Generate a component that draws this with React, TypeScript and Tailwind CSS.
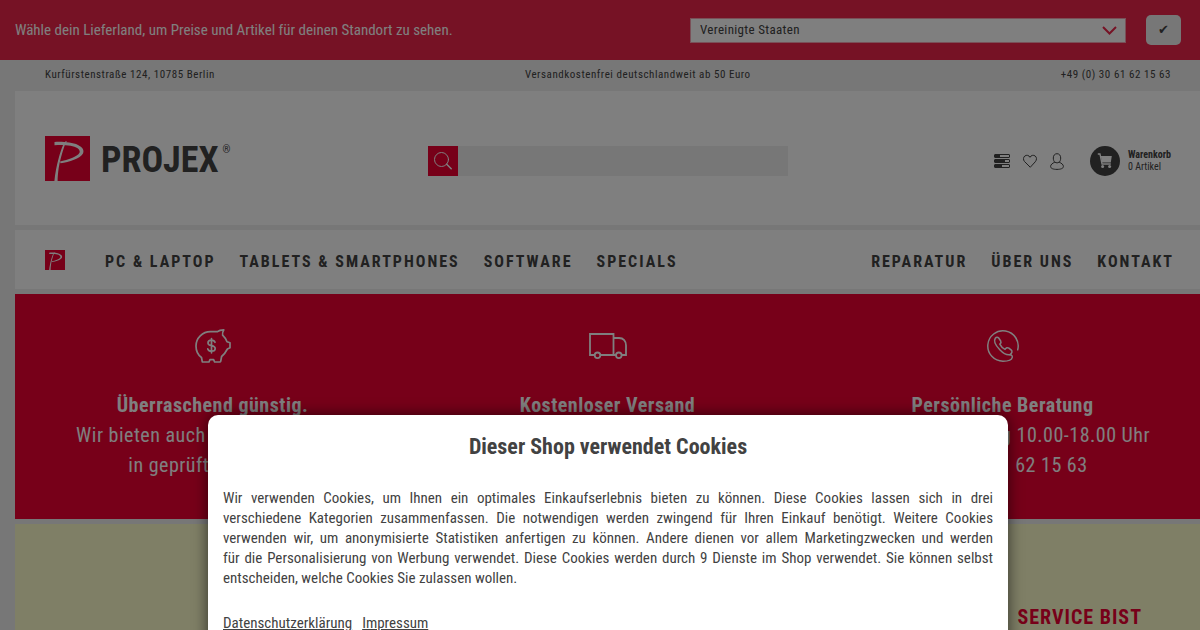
const mainNav = ["PC & Laptop", "Tablets & Smartphones", "Software", "Specials"];
const serviceNav = ["Reparatur", "Über uns", "Kontakt"];

const iconProps = {
  fill: "none",
  stroke: "currentColor",
  strokeLinecap: "round",
  strokeLinejoin: "round",
} as const;

function LogoMark({ className }: { className: string }) {
  return (
    <svg className={className} viewBox="0 0 45 45" aria-hidden="true">
      <rect width="45" height="45" fill="#ee0032" />
      <path
        fill="#fff"
        d="M9.500 6 C17 5.500 27 6.200 33 9 C37.500 11.300 39.500 14.200 38 17.500 C35.500 22.500 24 26 15.500 27.200 L15 25.500 C23 24 32.500 20.500 34.500 16.800 C36 13.500 31 10.500 25.500 9.700 C20 8.800 15 8.900 9.500 9.200 Z"
      />
      <path
        fill="#fff"
        d="M20.800 5 L21.800 5.600 L19.800 9 C17 17 14.800 25 13.700 32 C13 37 12.600 41 12.600 45 L9.400 45 C10 38 11.800 29 13.600 22.500 C15 17 16.800 12 17.900 9.500 Z"
      />
    </svg>
  );
}

function CountryBar() {
  return (
    <form className="flex items-center bg-[#ed254a] h-15 pl-[15px] pr-[19px] text-white">
      <label htmlFor="country" className="flex-1 text-[15px] leading-5">
        Wähle dein Lieferland, um Preise und Artikel für deinen Standort zu sehen.
      </label>
      <div className="relative w-[436px] mr-5">
        <select
          id="country"
          className="block w-full h-[25px] appearance-none bg-white border border-[#f5a0b0] pl-[9px] pr-8 text-[13px] tracking-wide text-[#424242]"
        >
          <option>Vereinigte Staaten</option>
          <option>Deutschland</option>
        </select>
        <svg
          className="absolute right-[9px] top-2 w-[15px] h-[9px] text-[#ed254a] pointer-events-none"
          viewBox="0 0 15 9"
          fill="none"
          stroke="currentColor"
          strokeWidth="2"
        >
          <path d="M1 1l6.500 6.500L14 1" />
        </svg>
      </div>
      <button
        type="button"
        aria-label="Lieferland speichern"
        className="w-[35px] h-[30px] rounded-[5px] bg-[#eee] text-[13px] text-[#424242]"
      >
        ✔
      </button>
    </form>
  );
}

function Header() {
  return (
    <header className="grid grid-cols-[1fr_360px_1fr] items-start bg-white h-[134px] pt-[45px] pl-[30px] pr-[29px]">
      <a href="#" className="flex text-[#424242]">
        <LogoMark className="w-[45px] h-[45px]" />
        <span className="pl-[11px] pt-0.5 text-[36px] leading-[45px] font-bold">PROJEX</span>
        <span className="pl-1 pt-1 text-[10px] leading-5">®</span>
      </a>

      <form className="flex h-[30px] mt-[10px]" role="search">
        <button type="button" aria-label="Suchen" className="w-[30px] bg-[#ee0032] text-white flex items-center justify-center">
          <svg className="w-[18px] h-[18px]" viewBox="0 0 18 18" {...iconProps}>
            <circle cx="7.500" cy="7.500" r="7" />
            <path d="M12.700 12.300l4.500 4.500" strokeWidth="1.500" />
          </svg>
        </button>
        <input type="search" aria-label="Suche" className="flex-1 min-w-0 bg-[#eee] px-2 text-sm" />
      </form>

      <div className="flex items-center justify-end mt-[10px] text-[#424242]">
        <a href="#" aria-label="Vergleichen" className="mr-[13px]">
          <svg className="w-4 h-[14px]" viewBox="0 0 16 14" fill="none" stroke="currentColor">
            <rect x="0.500" y="0.500" width="15" height="3" rx="0.500" />
            <rect x="0.500" y="5.500" width="15" height="3" rx="0.500" />
            <rect x="0.500" y="10.500" width="15" height="3" rx="0.500" />
            <path d="M1 2h5M1 7h10M1 12h7" strokeWidth="3" />
          </svg>
        </a>
        <a href="#" aria-label="Merkzettel" className="mr-[13px]">
          <svg className="w-[14px] h-[14px]" viewBox="0 0 14 14" {...iconProps}>
            <path d="M7 13L1.500 7.500C0 5.800.200 3.300 1.800 2 3.500.700 6 1.200 7 3.300 8 1.200 10.500.700 12.200 2c1.600 1.300 1.800 3.800.300 5.500z" />
          </svg>
        </a>
        <a href="#" aria-label="Mein Konto" className="mr-[26px]">
          <svg className="w-[14px] h-[17px]" viewBox="0 0 14 17" {...iconProps}>
            <path d="M4.800 9.200C3.800 8.300 3.300 6.800 3.300 5 3.300 2.500 4.700.700 7 .700S10.700 2.500 10.700 5c0 1.800-.500 3.300-1.500 4.200 2.300 1 4.200 2.300 4.200 4.300s-2.800 2.900-6.400 2.900-6.400-.900-6.400-2.900 1.900-3.300 4.200-4.300Q7 10.800 9.200 9.200" />
          </svg>
        </a>
        <a href="#" className="flex items-center gap-2">
          <span className="flex items-center justify-center w-[30px] h-[30px] rounded-full bg-[#424242] text-white">
            <svg className="w-4 h-4" viewBox="0 0 16 16" fill="none" stroke="currentColor">
              <path fill="currentColor" stroke="none" d="M3.800 3h11l-1 6.500H5z" />
              <path d="M.800 1H3l2 10h8.800" strokeWidth="1.300" />
              <circle cx="5.600" cy="13.600" r="1.500" fill="currentColor" stroke="none" />
              <circle cx="12.600" cy="13.600" r="1.500" fill="currentColor" stroke="none" />
            </svg>
          </span>
          <span className="text-[10px] leading-3">
            <strong className="block">Warenkorb</strong>
            0 Artikel
          </span>
        </a>
      </div>
    </header>
  );
}

function Nav() {
  return (
    <nav className="flex items-center bg-white h-[59px] pl-[30px] pr-[26px] text-[16px] leading-5 font-bold uppercase tracking-[2px] text-[#424242]">
      <a href="#" aria-label="Startseite" className="mr-10">
        <LogoMark className="w-5 h-5" />
      </a>
      <div className="flex flex-1 gap-6 pt-1">
        {mainNav.map((item) => (
          <a key={item} href="#">{item}</a>
        ))}
      </div>
      <div className="flex gap-6 pt-1">
        {serviceNav.map((item) => (
          <a key={item} href="#">{item}</a>
        ))}
      </div>
    </nav>
  );
}

function PiggyIcon() {
  return (
    <svg className="w-9 h-[34px]" viewBox="0 0 36 34" {...iconProps} strokeWidth="1.700">
      <path d="M22.500 2.700C24 1.300 26 .900 28.800.900 27.600 2.800 27.300 4.500 27.600 6.200 29.500 8 31 10.300 32 12.800L35 13.800V18.800L32.400 20C31 22.800 29 25.500 26.600 27.500L25.700 32.300Q25.500 33 24.900 33H19.600L18.600 30.700H15L14 33H8.500L7.300 32.800 6.500 28.500C3 26 1 21.500 1 17 1 9 7.500 2.700 15.500 2.700Z" />
      <path d="M20 13.300C19.500 11.900 18 11.200 16.500 11.200c-1.900 0-3.500 1-3.500 2.700 0 3.900 7.200 1.700 7.200 5.600 0 1.700-1.700 2.700-3.600 2.700-1.800 0-3.300-.800-3.800-2.300M16.500 9.500v14.300" />
    </svg>
  );
}

function TruckIcon() {
  return (
    <svg className="w-[38px] h-[26px]" viewBox="0 0 38 26" fill="none" stroke="currentColor" strokeWidth="1.800">
      <path d="M5.500 22H1V1h23.500v21H11.500M24.500 5H30c4.500 0 7 3.200 7 7.500V22h-4M24.500 22h2.300" />
      <circle cx="8.500" cy="22.300" r="2.800" />
      <circle cx="29.800" cy="22.300" r="2.800" />
    </svg>
  );
}

function PhoneIcon() {
  return (
    <svg className="w-8 h-8" viewBox="0 0 32 32" {...iconProps} strokeWidth="1.500">
      <path d="M30.700 19.800A15.200 15.200 0 1 0 16 31.200C21 31.200 24.800 30 25.200 27.500 25.500 26 24.800 24.800 23 24.700" />
      <path d="M8.300 8.200C9.300 7 10.800 6.900 11.700 8l2 3c.700 1.200.300 2.200-.900 3.200 1.200 2.400 3 4.200 5.200 5.200 1.100-1.800 2.500-2.200 3.900-1.300l2.400 2c1.200 1.300.800 3-1.300 4.600-3 .600-6.800-1.400-10.200-5C8.800 15.500 6.300 11 8.300 8.200z" />
    </svg>
  );
}

const benefits = [
  {
    icon: <PiggyIcon />,
    title: "Überraschend günstig.",
    lines: ["Wir bieten auch Gebrauchtgeräte", "in geprüfter Qualität"],
  },
  {
    icon: <TruckIcon />,
    title: "Kostenloser Versand",
    lines: [],
  },
  {
    icon: <PhoneIcon />,
    title: "Persönliche Beratung",
    lines: ["Montag bis Freitag 10.00-18.00 Uhr", "Tel. 030 61 62 15 63"],
  },
];

function Benefits() {
  return (
    <section className="grid grid-cols-3 bg-[#ee0032] pt-8 pb-[39px] text-center text-[20px] leading-[30px] tracking-wide text-white">
      {benefits.map(({ icon, title, lines }) => (
        <div key={title}>
          <div className="flex items-center justify-center h-10 mb-6">{icon}</div>
          <h3 className="font-bold">{title}</h3>
          {lines.map((line) => (
            <p key={line}>{line}</p>
          ))}
        </div>
      ))}
    </section>
  );
}

function CookieDialog() {
  return (
    <div
      role="dialog"
      aria-labelledby="cookie-title"
      className="absolute left-1/2 -translate-x-1/2 ml-2 top-[415px] w-[800px] max-w-full min-h-[400px] bg-white rounded-[10px] shadow-[0_0_15px_rgba(0,0,0,0.6)] p-[15px] text-[15px] leading-5 text-[#424242]"
    >
      <h2 id="cookie-title" className="text-center text-[22px] leading-[34px] font-bold">
        Dieser Shop verwendet Cookies
      </h2>
      <p className="mt-6 text-justify">
        Wir verwenden Cookies, um Ihnen ein optimales Einkaufserlebnis bieten zu können. Diese Cookies lassen
        sich in drei verschiedene Kategorien zusammenfassen. Die notwendigen werden zwingend für Ihren Einkauf
        benötigt. Weitere Cookies verwenden wir, um anonymisierte Statistiken anfertigen zu können. Andere
        dienen vor allem Marketingzwecken und werden für&nbsp;die&nbsp;Personalisierung von Werbung verwendet.
        Diese Cookies werden durch 9 Dienste im Shop verwendet. Sie können selbst entscheiden, welche Cookies
        Sie zulassen wollen.
      </p>
      <div className="flex gap-[10px] mt-[25px]">
        <a href="#" className="underline">Datenschutzerklärung</a>
        <a href="#" className="underline">Impressum</a>
      </div>
    </div>
  );
}

export default function App() {
  return (
    <div className="relative h-screen overflow-hidden bg-[#eee] font-['Roboto_Condensed',Roboto,sans-serif]">
      <CountryBar />
      <div className="flex justify-between h-[31px] pl-[45px] pr-[29px] text-[11px] leading-[29px] tracking-wider text-[#424242]">
        <span>Kurfürstenstraße 124, 10785 Berlin</span>
        <span>Versandkostenfrei deutschlandweit ab 50 Euro</span>
        <span>+49 (0) 30 61 62 15 63</span>
      </div>
      <main className="flex flex-col gap-[5px] pl-[15px]">
        <Header />
        <Nav />
        <Benefits />
        <section className="bg-[#ffffcc] h-[300px] pt-[78px] pr-[58px] text-right">
          <h2 className="text-[20px] leading-[30px] font-bold uppercase tracking-wider text-[#ee0032]">
            Service bist
          </h2>
        </section>
      </main>

      <div className="absolute inset-0 bg-black/50" />
      <CookieDialog />
    </div>
  );
}
